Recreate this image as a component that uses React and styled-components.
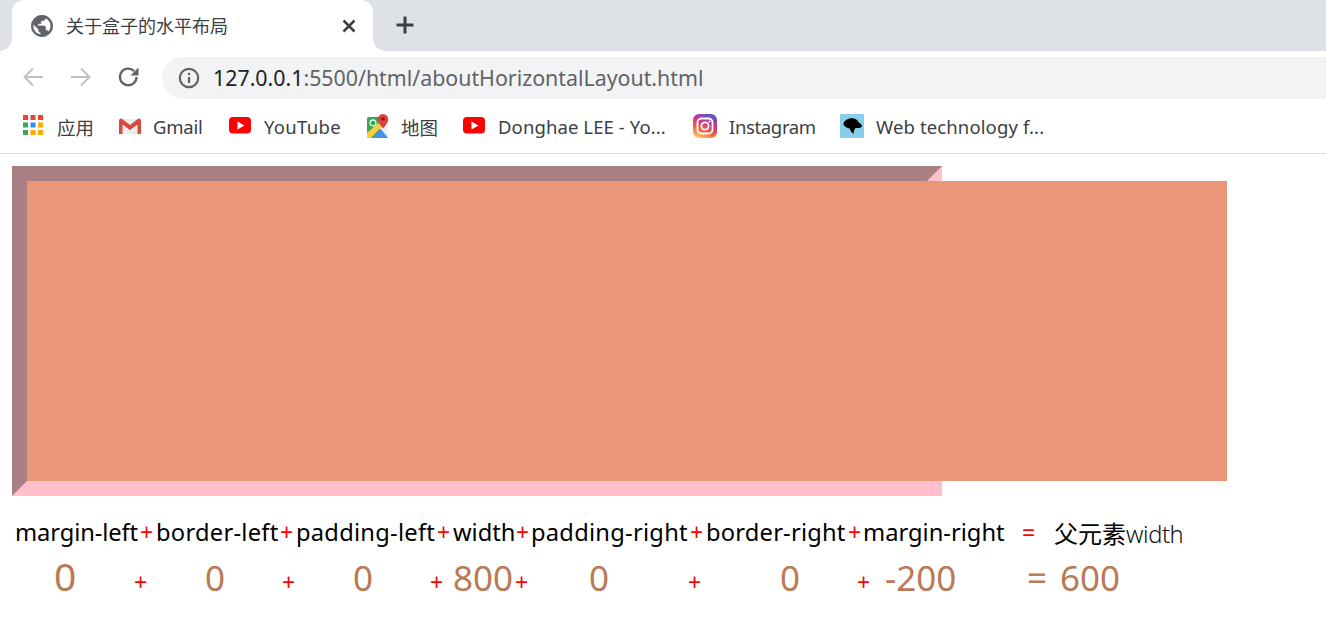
import React from 'react';
import styled, { createGlobalStyle } from 'styled-components';

const Global = createGlobalStyle`
  html, body { margin: 0; padding: 0; background: #fff; overflow: hidden; }
  body { font-family: "Noto Sans", "Noto Sans CJK SC", sans-serif; }
`;
const Page = styled.div`width: 1326px; height: 628px; overflow: hidden; display: flex; flex-direction: column;`;
const TabStrip = styled.div`height: 51px; background: #dee1e6; display: flex; align-items: flex-start; position: relative;`;
const Tab = styled.div`
  width: 361px; height: 51px; margin-left: 12px; background: #fff; border-radius: 12px 12px 0 0;
  display: flex; align-items: center; padding: 0 15px 0 19px; box-sizing: border-box;
  position: relative;
  &::before, &::after { content: ""; position: absolute; bottom: 0; width: 12px; height: 12px; background: radial-gradient(circle at var(--c) 0, #dee1e6 11.5px, #fff 12px); }
  &::before { left: -12px; --c: 0; }
  &::after { right: -12px; --c: 100%; }
`;
const TabTitle = styled.span`flex: 1; margin-left: 13px; padding-bottom: 2px; font: 18px "Noto Sans CJK SC", sans-serif; color: #3c4043; white-space: nowrap;`;
const PlusBtn = styled.div`margin: 14px 0 0 21px; width: 22px; height: 22px; display: flex;`;
const Toolbar = styled.div`height: 49px; padding: 6px 0 0 21px; background: #fff; display: flex; align-items: flex-start;`;
const Nav = styled.div`width: 24px; height: 24px; margin: 8px ${p => p.$end ? 21 : 24}px 0 0; display: flex;`;
const Omnibox = styled.div`flex: 1; height: 42px; background: #f1f3f4; border-radius: 21px 0 0 21px; display: flex; align-items: center; padding-left: 15px;`;
const Url = styled.div`margin-left: 12px; padding-bottom: 2px; font: 21.35px "Noto Sans", sans-serif; color: #5f6368; white-space: nowrap;`;
const Host = styled.span`color: #202124;`;
const Bookmarks = styled.div`height: 39px; padding: 0 0 8px 22px; background: #fff; border-bottom: 1px solid #dadce0; display: flex; align-items: center;`;
const Mark = styled.div`display: flex; align-items: center; width: ${p => p.$w}px; flex: none;`;
const MarkIcon = styled.span`width: 24px; height: 24px; flex: none; display: flex; margin-right: ${p => p.$gap || 11}px;`;
const MarkText = styled.span`padding-top: 2px; font: 18.5px "Noto Sans", "Noto Sans CJK SC", sans-serif; color: #3c4043; white-space: nowrap; letter-spacing: ${p => p.$ls || 0}px;`;
const Content = styled.div`padding: 12px;`;
const Outer = styled.div`
  width: 900px; height: 300px; border-style: solid; border-width: 15px;
  border-color: #a97f84 #ffc0cb #ffc0cb #a97f84;
`;
const Inner = styled.div`width: 1200px; height: 300px; background: #e99679;`;
const Row = styled.div`display: flex; white-space: nowrap;`;
const LabelRow = styled(Row)`margin-top: 19px; height: 34px; align-items: center; font-size: 23.7px; color: #000;`;
const ValueRow = styled(Row)`height: 46px; align-items: baseline; font-size: 35px; color: #b97a56;`;
const Cell = styled.span`flex: none; width: ${p => p.$w}px; padding-left: ${p => p.$x || 0}px; box-sizing: border-box; font-size: ${p => p.$s ? `${p.$s}px` : 'inherit'}; letter-spacing: ${p => p.$ls || 0}px;`;
const Op = styled(Cell)`color: #f00; font-size: ${p => p.$s || 23}px;`;
const Chinese = styled.span`font-size: 24px;`;
const Thin = styled.span`font-weight: 300; color: #111; letter-spacing: -0.4px;`;
const Svg = styled.svg`display: block; flex: none;`;

const Ic = ({ children, s = 24, vb = '0 0 24 24' }) => <Svg width={s} height={s} viewBox={vb}>{children}</Svg>;

const labels = [
  ['margin-left', 126, 3, 0, -0.1], ['+', 18, 0, 1], ['border-left', 122, 0, 0, 0.25], ['+', 18, 0, 1], ['padding-left', 139, 0, 0, 0.25], ['+', 18, 0, 1],
  ['width', 61, 0], ['+', 17, 0, 1], ['padding-right', 157, 0, 0, 0.25], ['+', 18, 0, 1], ['border-right', 140, 0, 0, 0.2], ['+', 17, 0, 1], ['margin-right', 157, 0], ['=', 34, 0, 1],
];
const values = [
  ['0', 122, 42, 0, 39], ['+', 71, 0, 1], ['0', 77, 0], ['+', 71, 0, 1], ['0', 77, 0], ['+', 23, 0, 1], ['800', 62, 0], ['+', 74, 0, 1],
  ['0', 99, 0], ['+', 92, 0, 1], ['0', 77, 0], ['+', 28, 0, 1], ['-200', 142, 0], ['=', 33, 0], ['600', 70, 0],
];

export default function App() {
  return (
    <Page>
      <Global />
      <TabStrip>
        <Tab>
          <Ic s={22} vb="2 2 20 20"><path fill="#5f6368" stroke="#5f6368" strokeWidth="0.7" d="M12 2.300a9.700 9.700 0 1 0 0 19.400 9.700 9.700 0 0 0 0-19.400Zm-1 17.700a8 8 0 0 1-7-9.900L9 15v1c0 1.100.9 2 2 2v2Zm6.900-2.500A2 2 0 0 0 16 16h-1v-3c0-.55-.45-1-1-1H8v-2h2c.55 0 1-.45 1-1V7h2c1.100 0 2-.9 2-2v-.41a8 8 0 0 1 2.900 12.910Z" /></Ic>
          <TabTitle>关于盒子的水平布局</TabTitle>
          <Ic s={18} vb="0 0 18 18"><path d="M3.500 3.500l11 11M14.500 3.500l-11 11" stroke="#3c4043" strokeWidth="2.500" /></Ic>
        </Tab>
        <PlusBtn><Ic s={22} vb="0 0 22 22"><path d="M11 2.500v17M2.500 11h17" stroke="#3c4043" strokeWidth="3" /></Ic></PlusBtn>
      </TabStrip>
      <Toolbar>
        <Nav><Ic><path d="M22 12H4M12 3.500 3.500 12l8.500 8.500" fill="none" stroke="#bdc1c6" strokeWidth="2" /></Ic></Nav>
        <Nav><Ic><path d="M2 12h18M12 3.500l8.500 8.500-8.500 8.500" fill="none" stroke="#bdc1c6" strokeWidth="2" /></Ic></Nav>
        <Nav $end><Ic><path d="M19.500 12a8.300 8.300 0 1 1-2.400-5.900" fill="none" stroke="#5f6368" strokeWidth="2.300" /><path d="M21.500 2.500v8h-8z" fill="#5f6368" /></Ic></Nav>
        <Omnibox>
          <Ic><circle cx="12" cy="12" r="9.200" fill="none" stroke="#5f6368" strokeWidth="2.200" /><path d="M12 11v6" stroke="#5f6368" strokeWidth="2.200" /><circle cx="12" cy="8" r="1.300" fill="#5f6368" /></Ic>
          <Url><Host>127.0.0.1</Host>:5500/html/aboutHorizontalLayout.html</Url>
        </Omnibox>
      </Toolbar>
      <Bookmarks>
        <Mark $w={96}>
          <MarkIcon $gap={11}><Ic>
            {[['#ea4335', '#ea4335', '#ea4335'], ['#34a853', '#2d8cff', '#ffa800'], ['#34a853', '#ffa800', '#ffa800']].map((r, y) => r.map((c, x) => <rect key={x + '' + y} x={1 + x * 7.5} y={1 + y * 7.5} width="5" height="5" fill={c} />))}
          </Ic></MarkIcon>
          <MarkText>应用</MarkText>
        </Mark>
        <Mark $w={110}>
          <MarkIcon $gap={11}><Ic>
            <path d="M2 5h20v15H2z" fill="#ececec" /><path d="M1 6.500A2 2 0 0 1 4.200 5L12 11l7.800-6a2 2 0 0 1 3.200 1.500V20h-3.500V10.500L12 16 4.500 10.500V20H1z" fill="#d54b3d" />
          </Ic></MarkIcon>
          <MarkText $ls={-0.2}>Gmail</MarkText>
        </Mark>
        <Mark $w={138}>
          <MarkIcon $gap={12}><Ic><rect x="1" y="3" width="22" height="16.500" rx="4" fill="#f00" /><path d="M9.500 7.500v8l7-4z" fill="#fff" /></Ic></MarkIcon>
          <MarkText $ls={0.3}>YouTube</MarkText>
        </Mark>
        <Mark $w={96}>
          <MarkIcon $gap={11}><Ic>
            <rect x="1" y="3" width="21" height="21" rx="1.500" fill="#34a853" /><circle cx="7" cy="9" r="3" fill="none" stroke="#e6f4ea" strokeWidth="1.300" /><path d="M14 3h8v21h-3L14 15z" fill="#eef0f2" /><path d="M6 24l9-9 7 9z" fill="#4a90e8" /><path d="M1 19 16 6l3 3L5 24H1z" fill="#fbd043" /><path d="M17 0a5.200 5.200 0 0 1 5.200 5.200c0 3.600-5.200 9.300-5.200 9.300s-5.200-5.700-5.200-9.300A5.200 5.200 0 0 1 17 0Z" fill="#db4437" /><circle cx="17" cy="5" r="1.800" fill="#7b1f1a" />
          </Ic></MarkIcon>
          <MarkText>地图</MarkText>
        </Mark>
        <Mark $w={231}>
          <MarkIcon $gap={12}><Ic><rect x="1" y="3" width="22" height="16.500" rx="4" fill="#f00" /><path d="M9.500 7.500v8l7-4z" fill="#fff" /></Ic></MarkIcon>
          <MarkText $ls={0.1}>Donghae LEE - Yo...</MarkText>
        </Mark>
        <Mark $w={147}>
          <MarkIcon $gap={12}><Ic>
            <defs><linearGradient id="ig" x1="0.25" y1="1" x2="0.7" y2="0"><stop offset="0" stopColor="#fdc468" /><stop offset="0.35" stopColor="#f0603e" /><stop offset="0.65" stopColor="#c9338f" /><stop offset="1" stopColor="#5a57c7" /></linearGradient></defs>
            <rect width="24" height="24" rx="6" fill="url(#ig)" /><rect x="4.500" y="4.500" width="15" height="15" rx="4" fill="none" stroke="#fff" strokeWidth="1.800" /><circle cx="12" cy="12" r="3.600" fill="none" stroke="#fff" strokeWidth="1.800" /><circle cx="16.500" cy="7.500" r="1.100" fill="#fff" />
          </Ic></MarkIcon>
          <MarkText $ls={-0.35}>Instagram</MarkText>
        </Mark>
        <Mark $w={220}>
          <MarkIcon $gap={12}><Ic>
            <rect width="24" height="24" fill="#87ceeb" /><path d="M3.500 9C5 6 9 4 13 4.300c2.500.2 4.500 1.700 5.500 3.700l3.500 3.300c.3 1.200-1 2.700-3 2.700h-3.500l-1.500 2.500-.5 3.500-2.500-2.500-1.500-3-3-1-2-1.500-1-1.500z" fill="#000" />
          </Ic></MarkIcon>
          <MarkText $ls={0.12}>Web technology f...</MarkText>
        </Mark>
      </Bookmarks>
      <Content>
        <Outer><Inner /></Outer>
        <LabelRow>
          {labels.map(([t, w, x, op, ls], i) => op ? <Op key={i} $w={w} $x={2}>{t}</Op> : <Cell key={i} $w={w} $x={x} $ls={ls}>{t}</Cell>)}
          <Cell $w={200}><Chinese>父元素</Chinese><Thin>width</Thin></Cell>
        </LabelRow>
        <ValueRow>
          {values.map(([t, w, x, op, s], i) => op ? <Op key={i} $w={w} $s={23}>{t}</Op> : <Cell key={i} $w={w} $x={x} $s={s}>{t}</Cell>)}
        </ValueRow>
      </Content>
    </Page>
  );
}
